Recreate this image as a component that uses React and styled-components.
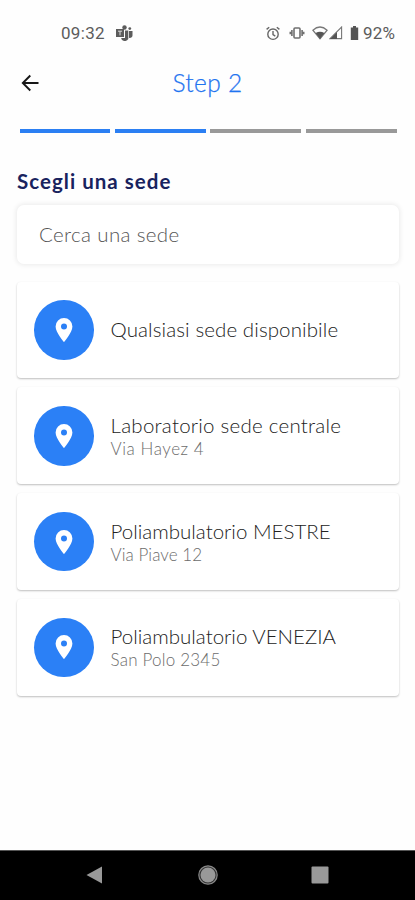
import React from "react";
import styled, { createGlobalStyle } from "styled-components";

const GlobalStyle = createGlobalStyle`
  * { box-sizing: border-box; }
  body { margin: 0; background: #fefefe; font-family: Lato, "Noto Sans", sans-serif; }
`;

const Screen = styled.div`
  width: 415px;
  height: 900px;
  display: flex;
  flex-direction: column;
  background: #fefefe;
  overflow: hidden;
`;

const StatusBar = styled.div`
  height: 57px;
  padding: 9px 18px 0 61px;
  display: flex;
  align-items: center;
  color: #5c5c5c;
  font-family: Roboto, sans-serif;
  font-size: 17px;
  line-height: 20px;
`;

const Time = styled.span`
  width: 55px;
  letter-spacing: 0.3px;
`;

const StatusIcons = styled.div`
  margin-left: auto;
  display: flex;
  align-items: center;
`;

const Glyph = styled.svg`
  display: block;
  flex: none;
  margin-right: ${(p) => p.$after || 0}px;
`;

const Battery = styled.span`
  width: 34px;
  white-space: nowrap;
  letter-spacing: 0.2px;
`;

const Header = styled.header`
  height: 52px;
  padding: 0 21px;
  display: grid;
  grid-template-columns: 40px 1fr 40px;
  align-items: center;
`;

const BackButton = styled.button`
  border: 0;
  padding: 0;
  background: none;
  width: 20px;
  height: 20px;
`;

const StepTitle = styled.h1`
  margin: 0;
  padding-bottom: 1px;
  text-align: center;
  font-weight: 300;
  font-size: 24.5px;
  line-height: 30px;
  letter-spacing: 0.35px;
  color: #1f74f0;
  -webkit-text-stroke: 0.25px #1f74f0;
`;

const Progress = styled.div`
  margin: 20px 18.5px 0 19.5px;
  display: grid;
  grid-template-columns: repeat(4, 1fr);
  gap: 4.5px;
`;

const Segment = styled.div`
  height: 4px;
  background: ${(p) => (p.$done ? "#2b7ff3" : "#999")};
`;

const Content = styled.main`
  flex: 1;
  padding: 35px 16px 0 17px;
`;

const SectionTitle = styled.h2`
  margin: 0 0 11px;
  font-size: 20.5px;
  line-height: 26px;
  font-weight: 700;
  letter-spacing: 1.03px;
  color: #19235e;
`;

const SearchInput = styled.input`
  display: block;
  width: 100%;
  height: 59px;
  padding: 0 22px 1px;
  border: 0;
  outline: 0;
  border-radius: 7px;
  background: #fff;
  box-shadow: 0 0 5px 1px rgba(0, 0, 0, 0.08);
  font: 300 20.5px Lato, sans-serif;
  letter-spacing: 0.35px;
  &::placeholder { color: #555; opacity: 1; }
`;

const Locations = styled.div`
  margin-top: 17.6px;
  display: grid;
  gap: 9px;
`;

const Card = styled.div`
  height: 96.8px;
  padding: 0 17px;
  display: flex;
  align-items: center;
  gap: 17px;
  border-radius: 4px;
  background: #fff;
  box-shadow: 0 1px 2px rgba(0, 0, 0, 0.25);
`;

const PinBadge = styled.div`
  width: 59.6px;
  height: 59.6px;
  flex: none;
  border-radius: 50%;
  display: grid;
  place-items: center;
  background: #2b80f6;
`;

const CardText = styled.div`
  padding-top: ${(p) => (p.$twoLines ? 2 : 0)}px;
  padding-bottom: ${(p) => (p.$twoLines ? 0 : 1)}px;
`;

const CardName = styled.div`
  font-size: 20.5px;
  font-weight: 300;
  line-height: 23px;
  letter-spacing: ${(p) => p.$tracking}px;
  color: #222;
  white-space: nowrap;
`;

const CardAddress = styled.div`
  font-size: 17px;
  font-weight: 300;
  line-height: 23px;
  letter-spacing: ${(p) => p.$tracking}px;
  color: #6c6c6c;
`;

const NavBar = styled.nav`
  height: 50px;
  border-top: 1px solid #555;
  background: #000;
  padding: 0 86px 1px 86px;
  display: flex;
  align-items: center;
  justify-content: space-between;
`;

const LOCATIONS = [
  { name: "Qualsiasi sede disponibile", nameTracking: 0.1 },
  { name: "Laboratorio sede centrale", nameTracking: 0.24, address: "Via Hayez 4", addressTracking: 0.55 },
  { name: "Poliambulatorio MESTRE", nameTracking: 0, address: "Via Piave 12", addressTracking: 0.05 },
  { name: "Poliambulatorio VENEZIA", nameTracking: 0, address: "San Polo 2345", addressTracking: 0.2 },
];

export default function App() {
  return (
    <Screen>
      <GlobalStyle />
      <StatusBar>
        <Time>09:32</Time>
        <Glyph width="17" height="16" viewBox="0 0 17 16" fill="#5c5c5c">
          <circle cx="8.5" cy="2.5" r="2.2" />
          <circle cx="13.8" cy="3.6" r="1.4" />
          <path d="M0 4h8v8H0zM9 5.5h3.3V14a4 4 0 0 1-7 0V13H9zM13 6h3.5v4.5a2.6 2.6 0 0 1-3.5 2.3z" />
          <path d="M2 6.2h4M4 6.2v4.2" stroke="#ddd" strokeWidth="1" />
        </Glyph>
        <StatusIcons>
          <Glyph $after={9} width="14" height="15" viewBox="0 0 14 15" fill="none" stroke="#666" strokeWidth="1.4">
            <circle cx="7" cy="8.2" r="5.2" />
            <path d="M7 5v3.6l2.3 1.5M.6 3.4l2.6-2.2M13.4 3.4l-2.6-2.2" />
          </Glyph>
          <Glyph $after={7} width="16" height="14" viewBox="0 0 16 14" fill="none" stroke="#707070" strokeWidth="1.6">
            <rect x="5" y="2" width="6" height="10" rx="1" />
            <path d="M2.9 4v6M13.1 4v6M1.3 5.7v2.6M14.7 5.7v2.6" />
          </Glyph>
          <Glyph $after={1} width="16" height="14" viewBox="0 0 16 14">
            <path d="M.9 4.2Q8-2.2 15.1 4.2L8 12.8z" fill="none" stroke="#777" strokeWidth="1.2" />
            <path d="M3.6 7Q8 4.5 12.4 7L8 13z" fill="#555" />
          </Glyph>
          <Glyph $after={7} width="14" height="14" viewBox="0 0 14 14">
            <path d="M1 12.6 12.6 1v11.6z" fill="none" stroke="#777" strokeWidth="1.1" />
            <path d="M1 13 8 6v7z" fill="#555" />
          </Glyph>
          <Glyph $after={4} width="9" height="14" viewBox="0 0 9 14">
            <path d="M3 0h3v1.5h2.2V14H.8V1.5H3z" fill="#555" />
          </Glyph>
          <Battery>92%</Battery>
        </StatusIcons>
      </StatusBar>
      <Header>
        <BackButton aria-label="Indietro">
          <Glyph width="19" height="18" viewBox="0 0 19 18" fill="none" stroke="#171717" strokeWidth="1.9">
            <path d="M17.5 9H2M9.3 1.5 1.8 9l7.5 7.5" />
          </Glyph>
        </BackButton>
        <StepTitle>Step 2</StepTitle>
      </Header>
      <Progress>
        <Segment $done />
        <Segment $done />
        <Segment />
        <Segment />
      </Progress>
      <Content>
        <SectionTitle>Scegli una sede</SectionTitle>
        <SearchInput placeholder="Cerca una sede" />
        <Locations>
          {LOCATIONS.map((l) => (
            <Card key={l.name}>
              <PinBadge>
                <Glyph width="18" height="24" viewBox="0 0 18 24">
                  <path fillRule="evenodd" fill="#fff" d="M9 0a8.4 8.4 0 0 0-8.4 8.4C.6 14.5 9 24 9 24s8.4-9.5 8.4-15.6A8.4 8.4 0 0 0 9 0zm0 5.5a3 3 0 1 1 0 6 3 3 0 0 1 0-6z" />
                </Glyph>
              </PinBadge>
              <CardText $twoLines={Boolean(l.address)}>
                <CardName $tracking={l.nameTracking}>{l.name}</CardName>
                {l.address && <CardAddress $tracking={l.addressTracking}>{l.address}</CardAddress>}
              </CardText>
            </Card>
          ))}
        </Locations>
      </Content>
      <NavBar>
        <Glyph width="18" height="18" viewBox="0 0 18 18"><path d="M.5 9 16 .5v17z" fill="#999" /></Glyph>
        <Glyph width="20" height="20" viewBox="0 0 20 20">
          <circle cx="10" cy="10" r="9.2" fill="#333" stroke="#888" strokeWidth="1.2" />
          <circle cx="10" cy="10" r="7.5" fill="#999" />
        </Glyph>
        <Glyph width="18" height="18" viewBox="0 0 18 18"><rect x=".5" y=".5" width="17" height="17" rx="1" fill="#999" /></Glyph>
      </NavBar>
    </Screen>
  );
}
